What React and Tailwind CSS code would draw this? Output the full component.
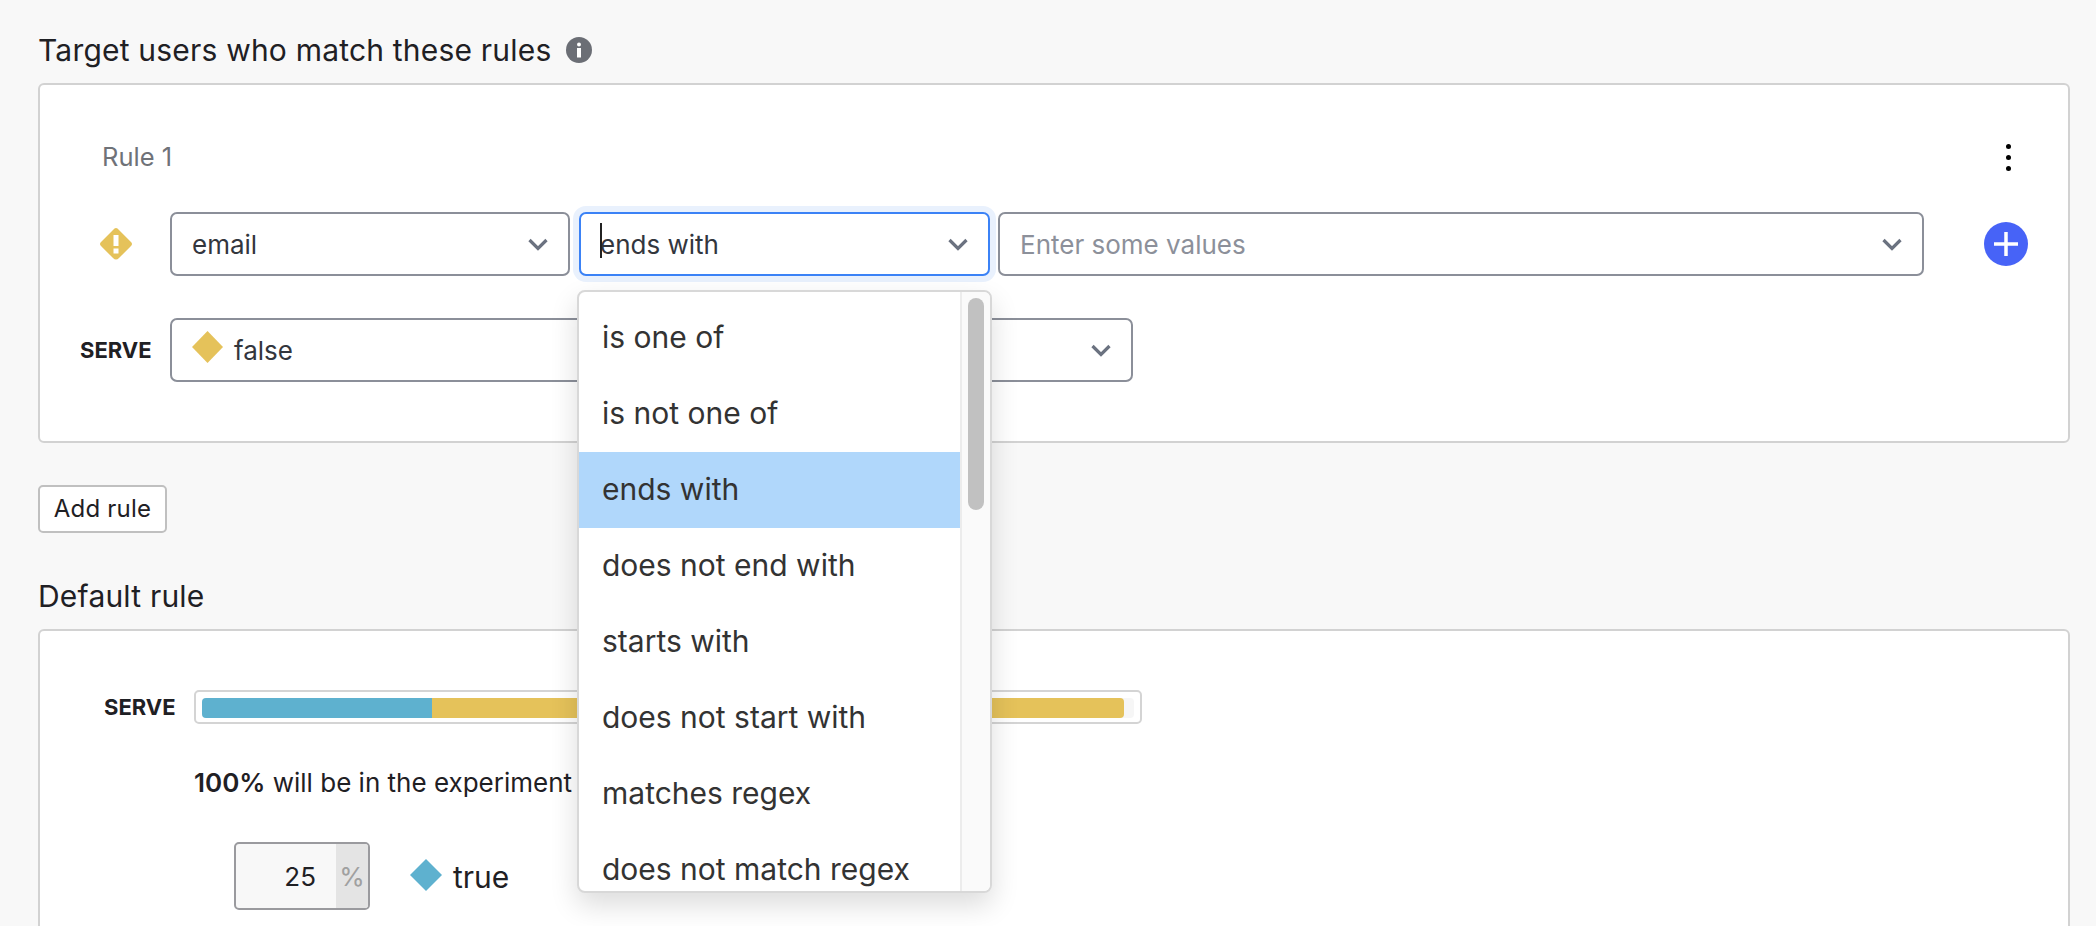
const Chevron = () => (
  <svg width="20" height="13" viewBox="0 0 20 13" fill="none" className="shrink-0">
    <path d="M1.5 2 L10 10.5 L18.5 2" stroke="#6b7280" strokeWidth="3.2" />
  </svg>
);

const Diamond = ({ color, w = 32, h = 32, className = "" }) => (
  <svg width={w} height={h} viewBox="0 0 32 32" className={`shrink-0 ${className}`} preserveAspectRatio="none">
    <path d="M16 0 L32 16 L16 32 L0 16 Z" fill={color} />
  </svg>
);

const options = [
  "is one of",
  "is not one of",
  "ends with",
  "does not end with",
  "starts with",
  "does not start with",
  "matches regex",
  "does not match regex",
];

const Dropdown = () => (
  <div className="absolute left-[-4px] top-[76px] z-20 flex h-[603px] w-[415px] overflow-hidden rounded-[8px] border-2 border-[#d8d8d8] bg-white shadow-[0_12px_28px_rgba(0,0,0,0.14)]">
    <div className="min-w-0 flex-1 pt-[8px]">
      {options.map((o) => (
        <div
          key={o}
          className={`flex h-[76px] items-center whitespace-nowrap pb-[2px] pl-[23px] text-[30px] text-[#333333] ${o === "ends with" ? "bg-[#b0d7fb]" : ""}`}
        >
          {o}
        </div>
      ))}
    </div>
    <div className="w-[30px] shrink-0 border-l-2 border-[#ececec] bg-[#fafafa] pl-[6px] pt-[6px]">
      <div className="h-[212px] w-[16px] rounded-full bg-[#c1c1c1]" />
    </div>
  </div>
);

const Select = ({ className = "", focused, children }) => (
  <div
    className={`relative flex h-[64px] shrink-0 items-center justify-between rounded-[7px] border-2 bg-white pl-[20px] pr-[20px] text-[26px] text-[#33363d] ${focused ? "border-[#3b82f6] shadow-[0_0_0_6px_#e9f1fd]" : "border-[#8b8f99]"} ${className}`}
  >
    {children}
  </div>
);

export default function App() {
  return (
    <div className="h-[926px] overflow-hidden bg-[#f8f8f8] pl-[38px] pr-[26px] pt-[32px] font-['Inter',sans-serif] text-[#1f2024]">
      <div className="flex h-[36px] items-center gap-[14px] text-[30px] leading-[36px] tracking-[0.2px]">
        <span>Target users who match these rules</span>
        <svg width="26" height="26" viewBox="0 0 26 26" className="shrink-0">
          <circle cx="13" cy="13" r="13" fill="#6b6e75" />
          <circle cx="13" cy="7.5" r="2" fill="#fff" />
          <rect x="11" y="11" width="4" height="9.5" fill="#fff" />
        </svg>
      </div>

      <div className="mt-[15px] h-[360px] rounded-[6px] border-2 border-[#d2d2d2] bg-white">
        <div className="flex h-[40px] mt-[52px] items-center justify-between pl-[62px] pr-[57px]">
          <span className="text-[25.5px] text-[#6f7278]">Rule 1</span>
          <div className="flex flex-col gap-[6px]">
            <span className="h-[5px] w-[5px] rounded-full bg-black" />
            <span className="h-[5px] w-[5px] rounded-full bg-black" />
            <span className="h-[5px] w-[5px] rounded-full bg-black" />
          </div>
        </div>

        <div className="mt-[35px] flex items-center">
          <div className="flex w-[130px] shrink-0 pl-[59px]">
            <svg width="34" height="34" viewBox="0 0 34 34">
              <path d="M17 1 Q18.5 1 20 3 L32 15 Q34 17 32 19 L20 31 Q17 34 14 31 L2 19 Q0 17 2 15 L14 3 Q15.5 1 17 1 Z" fill="#e5c25a" />
              <rect x="14.5" y="8" width="5" height="11" fill="#fff" />
              <rect x="14.5" y="21.5" width="5" height="5" fill="#fff" />
            </svg>
          </div>
          <Select className="w-[400px]">
            <span>email</span>
            <Chevron />
          </Select>
          <Select focused className="ml-[9px] w-[411px] !pl-[19px]">
            <span className="relative">
              <span className="absolute left-[0px] top-[-2px] h-[35px] w-[2px] bg-[#222]" />
              ends with
            </span>
            <Chevron />
            <Dropdown />
          </Select>
          <Select className="ml-[8px] w-[926px] !pl-[20px]">
            <span className="text-[#8c909a]">Enter some values</span>
            <Chevron />
          </Select>
          <div className="ml-[60px] flex h-[44px] w-[44px] shrink-0 items-center justify-center rounded-full bg-[#4763f7]">
            <svg width="24" height="24" viewBox="0 0 24 24">
              <path d="M12 0 V24 M0 12 H24" stroke="#fff" strokeWidth="3.5" />
            </svg>
          </div>
        </div>

        <div className="mt-[42px] flex items-center">
          <div className="w-[130px] shrink-0 pl-[40px] text-[22px] font-bold leading-none text-[#1f2024]">SERVE</div>
          <Select className="w-[963px] !pl-[20px]">
            <span className="flex items-center gap-[11px]">
              <Diamond color="#e5c25a" w={31} className="-mt-[6px]" />
              <span>false</span>
            </span>
            <Chevron />
          </Select>
        </div>
      </div>

      <button className="mt-[42px] flex h-[48px] w-[129px] items-center justify-center rounded-[5px] border-2 border-[#c0c0c0] bg-white text-[24px] tracking-[0.2px] text-[#1f2024]">
        Add rule
      </button>

      <div className="mt-[45px] flex h-[36px] items-center text-[30px] leading-[36px] tracking-[0.2px]">Default rule</div>

      <div className="mt-[15px] h-[400px] rounded-[6px] border-2 border-[#d2d2d2] bg-white pt-[59px]">
        <div className="flex items-center">
          <div className="w-[154px] shrink-0 pl-[64px] text-[22px] font-bold leading-none">SERVE</div>
          <div className="h-[34px] w-[948px] rounded-[5px] border-2 border-[#d4d4d4] bg-white py-[6px] pl-[6px] pr-[6px]">
            <div className="flex h-[20px] w-full overflow-hidden rounded-[4px] bg-[#f6f6f6]">
              <div className="w-[230px] bg-[#5eb1cf]" />
              <div className="w-[692px] rounded-r-[4px] bg-[#e5c25a]" />
            </div>
          </div>
        </div>
        <div className="ml-[154px] mt-[44px] h-[30px] text-[26px] leading-[30px]">
          <b className="font-semibold">100%</b> will be in the experiment
        </div>
        <div className="ml-[194px] mt-[44px] flex items-center">
          <div className="flex h-[68px] w-[136px] overflow-hidden rounded-[5px] border-2 border-[#9a9a9e] bg-[#f8f8f8]">
            <div className="flex flex-1 items-center justify-end pr-[20px] text-[26px]">25</div>
            <div className="flex w-[32px] items-center justify-center bg-[#e4e4e4] text-[26px] text-[#a0a0a0]">%</div>
          </div>
          <div className="ml-[40px] flex items-center gap-[11px]">
            <Diamond color="#5eb1cf" className="-mt-[3px]" />
            <span className="relative top-[1px] text-[30px]">true</span>
          </div>
        </div>
      </div>
    </div>
  );
}
